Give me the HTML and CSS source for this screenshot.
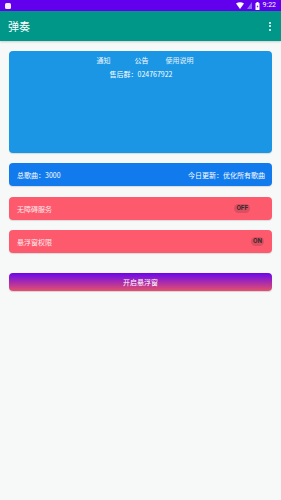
FILE: index.html
```html
<!DOCTYPE html>
<html lang="zh">
<head>
<meta charset="utf-8">
<link rel="stylesheet" href="styles.css">
</head>
<body>
<div class="status">
  <div class="status-left"><span class="notif"></span></div>
  <div class="status-right">
    <svg class="wifi" width="8" height="7" viewBox="0 0 8 7"><path d="M0 1.5 Q4 -1 8 1.5 L4 7 Z" fill="#fff"/></svg>
    <svg class="sig" width="5" height="7" viewBox="0 0 5 7"><path d="M5 0 L5 7 L0 7 Z" fill="#8b6df5"/></svg>
    <svg class="batt" width="5" height="8" viewBox="0 0 5 8"><rect x="1.5" y="0" width="2" height="1" fill="#fff"/><rect x="0.5" y="1" width="4" height="7" rx="0.6" fill="#fff"/><path d="M2.8 2.5 L1.6 4.8 L2.6 4.8 L2.2 6.5 L3.4 4 L2.4 4 Z" fill="#6200ee"/></svg>
    <span class="time">9:22</span>
  </div>
</div>
<div class="appbar">
  <span class="title">弹奏</span>
  <span class="more"><i></i><i></i><i></i></span>
</div>
<main class="content">
  <section class="notice">
    <div class="tabs">
      <span class="tab-notify">通知</span><span class="active">公告</span><span>使用说明</span>
    </div>
    <div class="group">售后群：024767922</div>
  </section>
  <div class="bar stats">
    <span>总歌曲：3000</span>
    <span>今日更新：优化所有歌曲</span>
  </div>
  <div class="bar perm">
    <span>无障碍服务</span>
    <span class="toggle off">OFF</span>
  </div>
  <div class="bar perm">
    <span>悬浮窗权限</span>
    <span class="toggle on">ON</span>
  </div>
  <button class="start">开启悬浮窗</button>
</main>
</body>
</html>
```
FILE: styles.css
```css
* { box-sizing: border-box; }
html, body { margin: 0; padding: 0; }
body {
  width: 281px;
  height: 500px;
  background: #f7f9f9;
  font-family: "Noto Sans CJK SC", "Noto Sans", Roboto, sans-serif;
  overflow: hidden;
}
.status {
  height: 11px;
  background: #6200ee;
  display: flex;
  align-items: center;
  justify-content: space-between;
  padding: 0 5px 0 5px;
}
.notif {
  display: block;
  width: 6px;
  height: 6px;
  border-radius: 1.5px;
  background: #f4ecff;
}
.status-right {
  display: flex;
  align-items: center;
  gap: 3px;
}
.time {
  color: #fff;
  font-family: Roboto, sans-serif;
  font-size: 7px;
  line-height: 11px;
}
.appbar {
  height: 30px;
  background: #009688;
  display: flex;
  align-items: center;
  justify-content: space-between;
  padding: 0 10px 0 8px;
  box-shadow: 0 1px 2px rgba(0,0,0,0.18);
}
.title {
  color: #fff;
  font-size: 11px;
  line-height: 1;
}
.more {
  display: flex;
  flex-direction: column;
  gap: 1.5px;
}
.more i {
  display: block;
  width: 2px;
  height: 2px;
  background: #fff;
  border-radius: 1px;
}
.content {
  padding: 10px 9px 0 9px;
  display: flex;
  flex-direction: column;
}
.notice {
  height: 102px;
  background: #1a96e4;
  border-radius: 4px;
  padding-top: 4px;
  color: #fff;
  box-shadow: 0 1px 1px rgba(0,0,0,0.12);
}
.tabs {
  display: flex;
  justify-content: center;
  gap: 17px;
  font-size: 7px;
  line-height: 10px;
  color: #e8f4fc;
  padding-left: 9px;
}
.tabs .tab-notify { margin-right: 7px; }
.tabs .active { color: #fff; }
.group {
  text-align: center;
  font-size: 7px;
  line-height: 10px;
  margin-top: 4px;
  padding-left: 1px;
}
.bar {
  height: 23px;
  border-radius: 4px;
  display: flex;
  align-items: center;
  justify-content: space-between;
  padding: 0 7px 0 8px;
  color: #fff;
  font-size: 7px;
  box-shadow: 0 1px 1px rgba(0,0,0,0.12);
}
.stats {
  margin-top: 10px;
  background: #117bee;
}
.perm {
  margin-top: 11px;
  background: #fd5a6d;
  color: #ffe9ec;
}
.perm + .perm { margin-top: 10px; }
.toggle {
  font-family: Roboto, sans-serif;
  font-weight: 700;
  font-size: 6.5px;
  line-height: 9px;
  padding: 0 2px;
  border-radius: 4.5px;
  color: #3a2a2e;
  background: rgba(80, 40, 50, 0.2);
}
.toggle.off { margin-right: 15px; }
.toggle.on { margin-right: 1px; }
.start {
  margin-top: 20px;
  height: 18px;
  border: none;
  border-radius: 4px;
  background: linear-gradient(to bottom, #6a05ee, #e4506c);
  color: #fff;
  font-family: "Noto Sans CJK SC", sans-serif;
  font-size: 7px;
  padding: 0;
  box-shadow: 0 1px 1px rgba(0,0,0,0.15);
}
```
